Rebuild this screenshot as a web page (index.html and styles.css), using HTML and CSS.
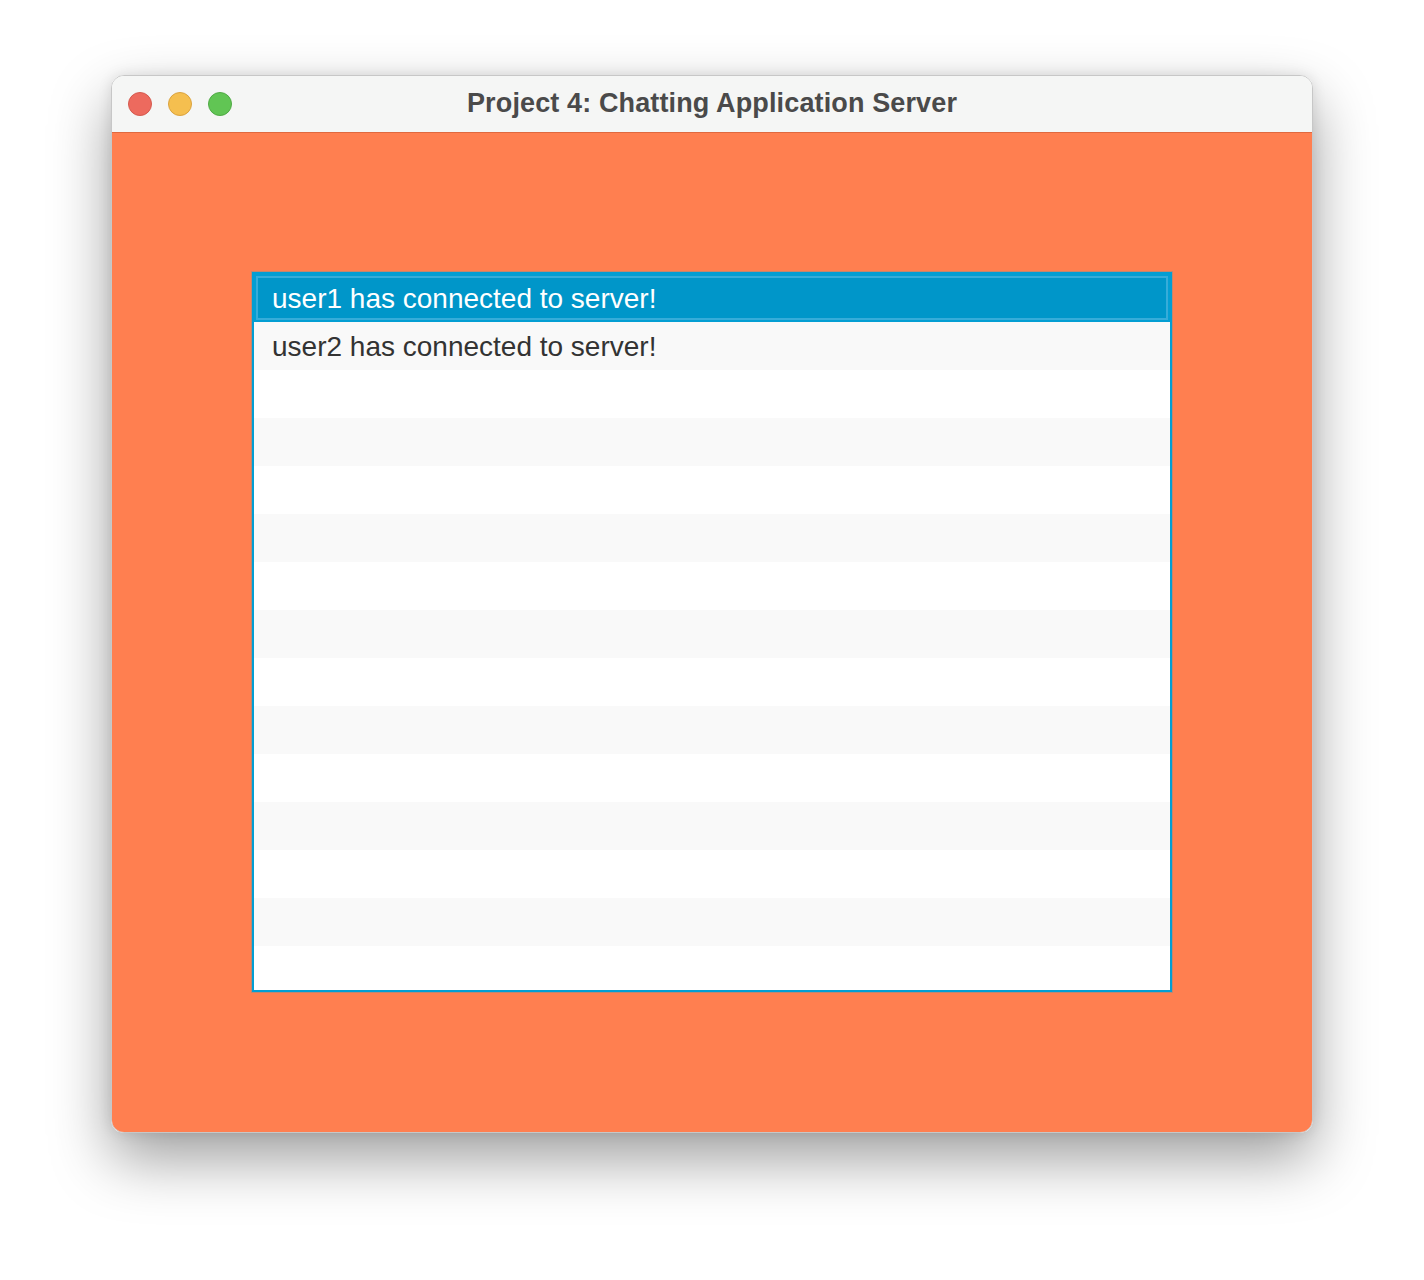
FILE: index.html
```html
<!DOCTYPE html>
<html>
<head>
<meta charset="utf-8">
<link rel="stylesheet" href="styles.css">
</head>
<body>
<div class="stage">
  <div class="window">
    <div class="titlebar">
      <div class="lights">
        <span class="light red"></span>
        <span class="light yellow"></span>
        <span class="light green"></span>
      </div>
      <div class="title">Project 4: Chatting Application Server</div>
    </div>
    <div class="content">
      <div class="list">
        <div class="row selected">user1 has connected to server!</div>
        <div class="row odd">user2 has connected to server!</div>
        <div class="row"></div>
        <div class="row odd"></div>
        <div class="row"></div>
        <div class="row odd"></div>
        <div class="row"></div>
        <div class="row odd"></div>
        <div class="row"></div>
        <div class="row odd"></div>
        <div class="row"></div>
        <div class="row odd"></div>
        <div class="row"></div>
        <div class="row odd"></div>
        <div class="row"></div>
      </div>
    </div>
  </div>
</div>
</body>
</html>
```

FILE: styles.css
```css
html, body {
  margin: 0;
  padding: 0;
  background: #ffffff;
}

.stage {
  padding: 75px 0 0 111px;
  height: 1205px;
}

.window {
  width: 1202px;
  height: 1058px;
  box-sizing: border-box;
  border: 1px solid rgba(0, 0, 0, 0.22);
  border-radius: 13px;
  overflow: hidden;
  display: flex;
  flex-direction: column;
  box-shadow: 0 26px 60px rgba(0, 0, 0, 0.38), 0 0 14px rgba(0, 0, 0, 0.1);
}

.titlebar {
  position: relative;
  height: 56px;
  flex: none;
  background: #f5f6f5;
  display: flex;
  align-items: center;
}

.lights {
  display: flex;
  gap: 16px;
  padding-left: 16px;
}

.light {
  width: 24px;
  height: 24px;
  border-radius: 50%;
  box-sizing: border-box;
}

.red { background: #ed6a5e; border: 1px solid #d55a4f; }
.yellow { background: #f5bf4f; border: 1px solid #dba33f; }
.green { background: #61c554; border: 1px solid #50aa45; }

.title {
  position: absolute;
  left: 0;
  right: 0;
  top: 0;
  line-height: 54px;
  text-align: center;
  font-family: "Liberation Sans", Arial, sans-serif;
  font-weight: bold;
  font-size: 27px;
  letter-spacing: 0.13px;
  color: #4a4a4a;
}

.content {
  flex: 1;
  background: #ff7f50;
  border-top: 1px solid #e0693f;
  padding: 139px 0 0 140px;
}

.list {
  width: 920px;
  height: 720px;
  box-sizing: border-box;
  border: 2px solid #039ed3;
  box-shadow: 0 0 0 1px rgba(3, 158, 211, 0.25);
  background: #ffffff;
  overflow: hidden;
}

.row {
  height: 48px;
  box-sizing: border-box;
  padding-left: 18px;
  padding-top: 1px;
  line-height: 47px;
  font-family: "Liberation Sans", Arial, sans-serif;
  font-size: 28px;
  color: #333333;
  background: #ffffff;
  white-space: nowrap;
}

.row.odd {
  background: #f9f9f9;
}

.row.selected {
  background: #0096c9;
  color: #ffffff;
  box-shadow: inset 0 0 0 2px #039ed3, inset 0 0 0 4px #36acd9;
}
```
